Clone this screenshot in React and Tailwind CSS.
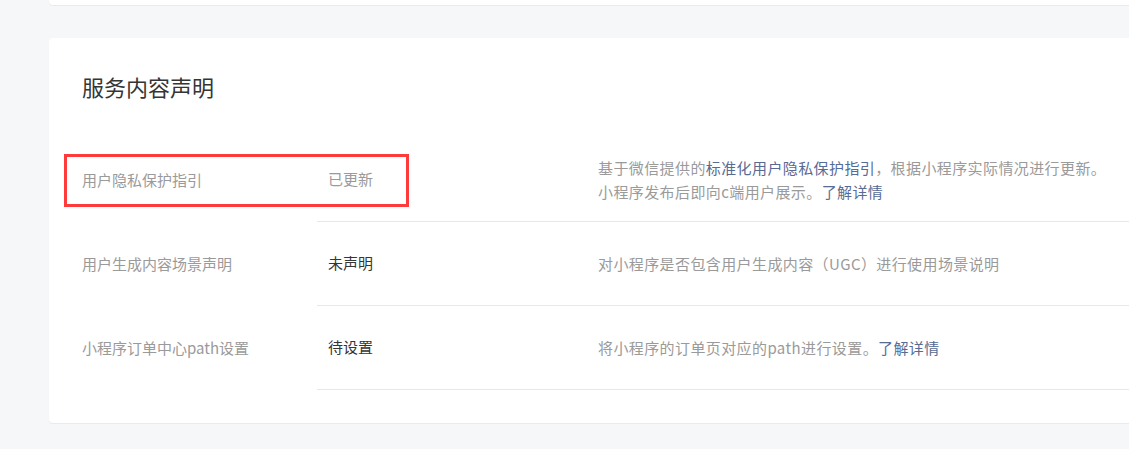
const ROWS = [
  {
    label: '用户隐私保护指引',
    status: '已更新',
    done: true,
    desc: (
      <>
        基于微信提供的<a className="text-[#576b95]">标准化用户隐私保护指引</a>，根据小程序实际情况进行更新。
        <br />
        小程序发布后即向c端用户展示。<a className="text-[#576b95]">了解详情</a>
      </>
    ),
    marked: true,
  },
  {
    label: '用户生成内容场景声明',
    status: '未声明',
    desc: <>对小程序是否包含用户生成内容（UGC）进行使用场景说明</>,
  },
  {
    label: '小程序订单中心path设置',
    status: '待设置',
    desc: (
      <>
        将小程序的订单页对应的path进行设置。<a className="text-[#576b95]">了解详情</a>
      </>
    ),
  },
];

export default function App() {
  return (
    <div
      className="w-full h-[449px] overflow-hidden bg-[#f6f7f9] pl-[49px]"
      style={{ fontFamily: '"Noto Sans CJK SC", "Noto Sans", sans-serif' }}
    >
      {/* previous card, only its bottom edge is visible */}
      <div className="h-[5px] -mr-[8px] bg-white rounded-b-[4px] shadow-[0_1px_1px_rgba(0,0,0,0.06)]" />

      <div className="mt-[33px] -mr-[8px] bg-white rounded-[4px] shadow-[0_1px_1px_rgba(0,0,0,0.06)] pl-[33px] pt-[33px] pb-[33px]">
        <h2 className="text-[22px] leading-[30px] text-[#353535] mb-[37px]">服务内容声明</h2>

        <div className="flex flex-col">
          {ROWS.map((row) => (
            <div key={row.label} className="relative flex h-[84px] text-[15px]">
              <div className="w-[235px] flex items-center text-[#9a9a9a]">{row.label}</div>
              <div className="flex-1 flex items-center border-b border-[#e7e7eb]">
                <div className={`w-[281px] pl-[11px] ${row.done ? 'text-[#9a9a9a]' : 'text-[#353535]'}`}>
                  {row.status}
                </div>
                <div className="flex-1 leading-[24px] text-[#9a9a9a] tracking-[0.4px]">{row.desc}</div>
              </div>
              {row.marked && (
                <div className="absolute left-[-18px] top-[16px] w-[345px] h-[53px] border-[3px] border-[#ff3a3a]" />
              )}
            </div>
          ))}
        </div>
      </div>
    </div>
  );
}
